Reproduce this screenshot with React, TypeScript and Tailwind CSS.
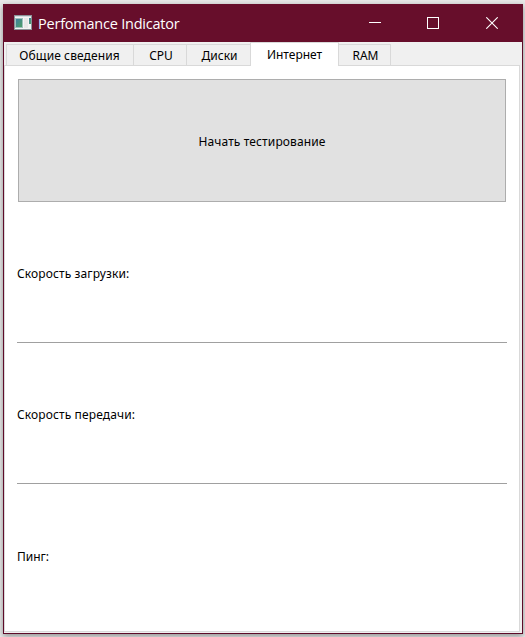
import React from 'react';

function AppIcon() {
  return (
    <svg width="18" height="15" viewBox="0 0 18 15" shapeRendering="crispEdges">
      <defs>
        <linearGradient id="screen" x1="0" y1="0" x2="1" y2="1">
          <stop offset="0" stopColor="#3f7fa0" />
          <stop offset="1" stopColor="#4fa066" />
        </linearGradient>
      </defs>
      <rect width="18" height="15" fill="#8b9297" />
      <rect x="1" y="1" width="16" height="13" fill="#f4f4f4" />
      <rect x="1" y="1" width="16" height="1" fill="#d3dbe0" />
      <rect x="1" y="3" width="8" height="10" fill="#9fc0bd" />
      <rect x="2" y="4" width="6" height="8" fill="url(#screen)" />
      <rect x="10" y="3" width="4" height="10" fill="#e8e8e8" />
      <rect x="15" y="3" width="2" height="6" fill="url(#screen)" />
    </svg>
  );
}

function TitleBar() {
  return (
    <header className="flex h-[38px] shrink-0 items-center bg-[#670e2b] pb-px pl-[11px]">
      <AppIcon />
      <h1 className="ml-[6px] flex-1 whitespace-nowrap pt-[2px] font-['Open_Sans','Noto_Sans',sans-serif] text-[14.5px] leading-[36px] tracking-[-0.22px] text-white">
        Perfomance Indicator
      </h1>
      <div className="flex h-full pr-[2px] pt-px">
        <button aria-label="Свернуть" className="flex w-[58px] items-center justify-center">
          <svg width="12" height="12" shapeRendering="crispEdges">
            <path d="M0 5.5h12" stroke="white" />
          </svg>
        </button>
        <button aria-label="Развернуть" className="flex w-[58px] items-center justify-center">
          <svg width="12" height="12" shapeRendering="crispEdges">
            <rect x=".5" y=".5" width="11" height="11" fill="none" stroke="white" />
          </svg>
        </button>
        <button aria-label="Закрыть" className="flex w-[59px] items-center justify-center">
          <svg width="12" height="12">
            <path d="M.3.3l11.4 11.4M11.7.3L.3 11.7" stroke="white" strokeWidth="1.1" />
          </svg>
        </button>
      </div>
    </header>
  );
}

const tabs = [
  { label: 'Общие сведения', size: 'w-[128px] border-l border-r pr-px tracking-[0.1px]' },
  { label: 'CPU', size: 'w-[53px] border-r pl-[2px]' },
  { label: 'Диски', size: 'w-[63px] pl-[2px]' },
  { label: 'Интернет', size: 'w-[89px]', active: true },
  { label: 'RAM', size: 'w-[52px] border-r pl-[2px]' },
];

function TabBar() {
  return (
    <nav className="flex h-[23px] shrink-0 items-end pl-[2px]">
      {tabs.map((tab) => (
        <button
          key={tab.label}
          className={
            tab.active
              ? `${tab.size} relative -mb-px flex h-6 items-center justify-center whitespace-nowrap border-x border-t border-[#d9d9d9] bg-white`
              : `${tab.size} flex h-[21px] items-center justify-center whitespace-nowrap border-t border-[#d9d9d9] bg-[#f0f0f0] pt-px`
          }
        >
          {tab.label}
        </button>
      ))}
    </nav>
  );
}

export default function App() {
  return (
    <div className="h-[637px] w-[525px] overflow-hidden bg-[#e9e9e9] pl-[3px] pt-1 font-['Noto_Sans','Open_Sans',sans-serif] text-[12px] leading-4 text-black">
      <div className="flex h-[630px] w-[520px] flex-col border-x border-b border-[#5e0b28] bg-[#f0f0f0] shadow-[0_2px_6px_rgba(0,0,0,0.4)]">
        <div className="-mx-px shrink-0">
          <TitleBar />
        </div>
        <TabBar />
        <main className="mb-px mr-[2px] flex flex-1 flex-col border border-[#d9d9d9] bg-white pl-[12px] pr-[12px] pt-[13px]">
          <button className="mx-px h-[123px] shrink-0 border border-[#adadad] bg-[#e1e1e1] pt-[2px] tracking-[0.12px]">
            Начать тестирование
          </button>
          <div className="flex h-[141px] shrink-0 items-center border-b border-[#a0a0a0] pt-[4px] tracking-[0.12px]">
            Скорость загрузки:
          </div>
          <div className="flex h-[141px] shrink-0 items-center border-b border-[#a0a0a0] pt-[4px] tracking-[0.12px]">
            Скорость передачи:
          </div>
          <div className="flex h-[145px] shrink-0 items-center">Пинг:</div>
        </main>
      </div>
    </div>
  );
}
